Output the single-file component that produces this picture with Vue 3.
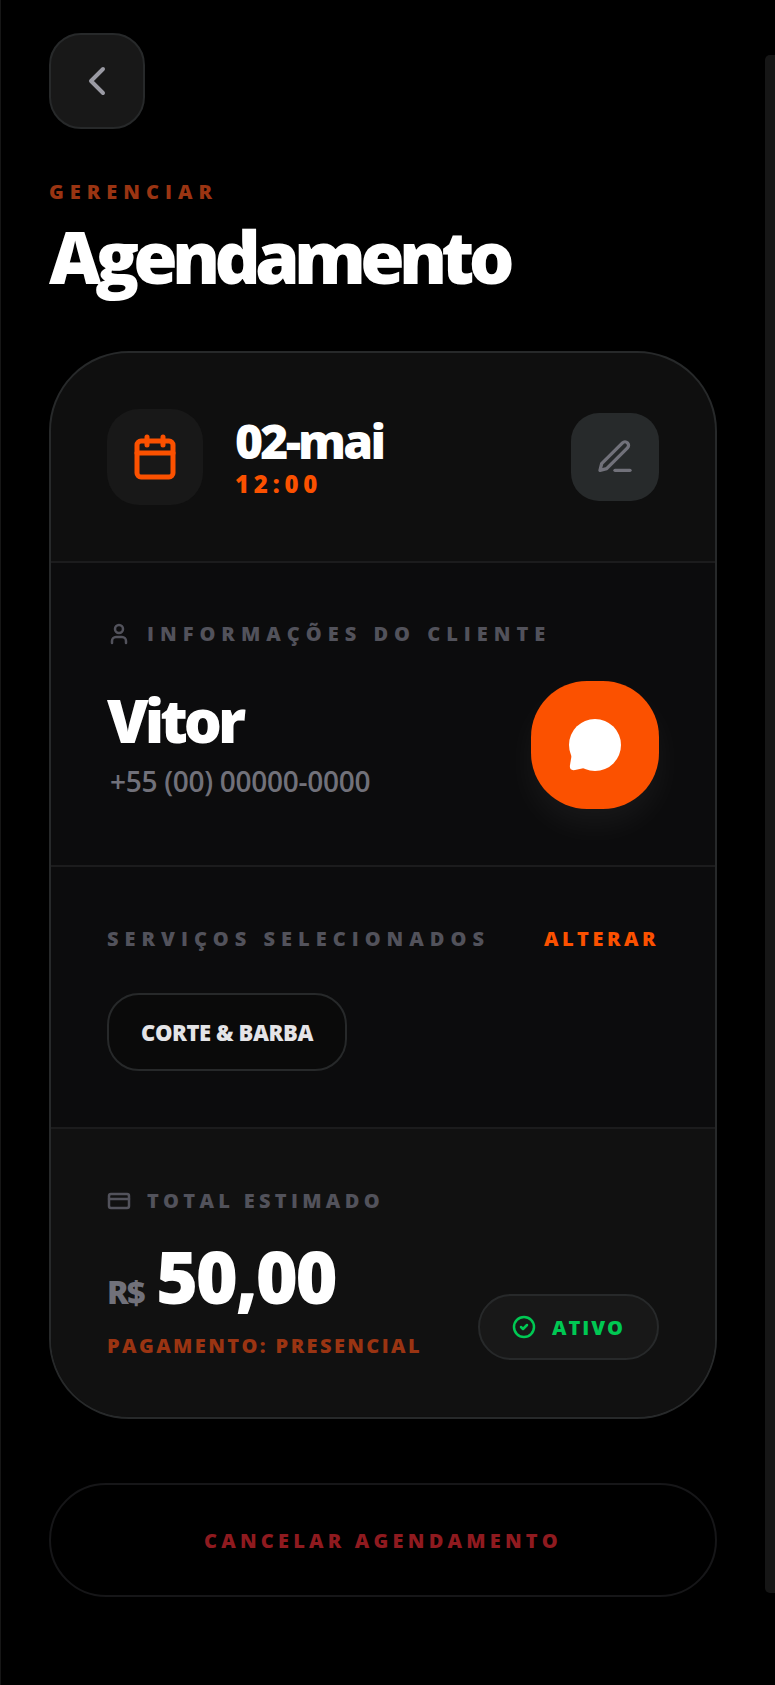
<script setup>
const telefone = '+55 (00) 00000-0000'
</script>

<template>
  <div class="pagina">
    <button class="voltar">
      <svg width="48" height="48" viewBox="0 0 24 24" fill="none" stroke="#9a9aa3" stroke-width="2" stroke-linecap="round" stroke-linejoin="round">
        <path d="m15 18-6-6 6-6" />
      </svg>
    </button>

    <p class="sobretitulo">GERENCIAR</p>
    <h1 class="titulo">Agendamento</h1>

    <section class="card">
      <div class="bloco bloco-data">
        <div class="icone-data">
          <svg width="48" height="48" viewBox="0 0 24 24" fill="none" stroke="#fb5100" stroke-width="2.5" stroke-linecap="round" stroke-linejoin="round">
            <path d="M8 2v4" />
            <path d="M16 2v4" />
            <rect x="3" y="4" width="18" height="18" rx="2" />
            <path d="M3 10h18" />
          </svg>
        </div>
        <div class="data-textos">
          <p class="data">02-mai</p>
          <p class="hora">12:00</p>
        </div>
        <button class="editar">
          <svg width="40" height="40" viewBox="0 0 24 24" fill="none" stroke="#71717a" stroke-width="2" stroke-linecap="round" stroke-linejoin="round">
            <path d="M12 20h9" />
            <path d="M16.5 3.5a2.12 2.12 0 0 1 3 3L7 19l-4 1 1-4Z" />
          </svg>
        </button>
      </div>

      <div class="bloco bloco-cliente">
        <div class="rotulo">
          <svg width="24" height="24" viewBox="0 0 24 24" fill="none" stroke="#52525b" stroke-width="2.5" stroke-linecap="round" stroke-linejoin="round">
            <path d="M19 21v-2a4 4 0 0 0-4-4H9a4 4 0 0 0-4 4v2" />
            <circle cx="12" cy="7" r="4" />
          </svg>
          <span>INFORMAÇÕES DO CLIENTE</span>
        </div>
        <div class="cliente-linha">
          <div class="cliente-textos">
            <p class="nome">Vitor</p>
            <p class="telefone">{{ telefone }}</p>
          </div>
          <button class="conversa">
            <svg width="52" height="52" viewBox="0 0 52 52" fill="#fff">
              <circle cx="26" cy="26" r="26" />
              <path d="M3 34 L1 46 Q0 52 6 51 L20 48 Z" />
            </svg>
          </button>
        </div>
      </div>

      <div class="bloco bloco-servicos">
        <div class="servicos-topo">
          <span class="rotulo-texto">SERVIÇOS SELECIONADOS</span>
          <span class="alterar">ALTERAR</span>
        </div>
        <div class="chip">CORTE &amp; BARBA</div>
      </div>

      <div class="bloco bloco-total">
        <div class="rotulo rotulo-total">
          <svg width="24" height="24" viewBox="0 0 24 24" fill="none" stroke="#52525b" stroke-width="2.5" stroke-linecap="round" stroke-linejoin="round">
            <rect x="2" y="5" width="20" height="14" rx="2" />
            <path d="M2 10h20" />
          </svg>
          <span>TOTAL ESTIMADO</span>
        </div>
        <div class="total-linha">
          <div>
            <p class="preco"><span class="moeda">R$</span><span class="valor">50,00</span></p>
            <p class="pagamento">PAGAMENTO: PRESENCIAL</p>
          </div>
          <div class="status">
            <svg width="24" height="24" viewBox="0 0 24 24" fill="none" stroke="#00c853" stroke-width="2.5" stroke-linecap="round" stroke-linejoin="round">
              <circle cx="12" cy="12" r="10" />
              <path d="m9 12 2 2 4-4" />
            </svg>
            <span>ATIVO</span>
          </div>
        </div>
      </div>
    </section>

    <button class="cancelar">CANCELAR AGENDAMENTO</button>

    <div class="barra-rolagem"></div>
  </div>
</template>

<style>
html,
body {
  margin: 0;
  background: #000;
}
</style>

<style scoped>
* {
  box-sizing: border-box;
}
p,
h1 {
  margin: 0;
}
button {
  font-family: inherit;
  cursor: pointer;
}
.pagina {
  position: relative;
  width: 775px;
  height: 1685px;
  overflow: hidden;
  padding: 33px 58px 0 48px;
  border-left: 1px solid #161616;
  background: #000;
  font-family: "Open Sans", "Liberation Sans", sans-serif;
}

/* TOPO */
.voltar {
  display: flex;
  align-items: center;
  justify-content: center;
  width: 96px;
  height: 96px;
  padding: 0;
  border: 2px solid #27292a;
  border-radius: 32px;
  background: #181818;
}
.sobretitulo {
  margin-top: 49px;
  font-size: 20px;
  line-height: 28px;
  font-weight: 800;
  letter-spacing: 6px;
  color: #9a3412;
}
.titulo {
  margin-top: 10px;
  font-size: 72px;
  line-height: 80px;
  font-weight: 800;
  letter-spacing: -5.8px;
  color: #fff;
}

/* CARD */
.card {
  margin-top: 55px;
  height: 1068px;
  border: 2px solid #27292a;
  border-radius: 80px;
  overflow: hidden;
  background: #0f0f0f;
}
.bloco {
  padding: 56px;
  border-bottom: 2px solid #1c1c1d;
}
.bloco:last-child {
  border-bottom: 0;
}
.bloco-data {
  display: flex;
  align-items: center;
  height: 210px;
}
.icone-data {
  display: flex;
  align-items: center;
  justify-content: center;
  width: 96px;
  height: 96px;
  border-radius: 32px;
  background: #181818;
}
.data-textos {
  flex: 1;
  margin-left: 32px;
}
.data {
  font-size: 48px;
  line-height: 52px;
  font-weight: 800;
  letter-spacing: -2.8px;
  color: #fff;
}
.hora {
  margin-top: 2px;
  font-size: 24px;
  line-height: 30px;
  font-weight: 800;
  letter-spacing: 0.2em;
  color: #fb5100;
}
.editar {
  display: flex;
  align-items: center;
  justify-content: center;
  width: 88px;
  height: 88px;
  padding: 0;
  border: 0;
  border-radius: 28px;
  background: #272a2b;
}

/* CLIENTE */
.bloco-cliente {
  height: 304px;
  background: #0c0c0d;
}
.rotulo {
  display: flex;
  align-items: center;
  gap: 16px;
  height: 28px;
  margin-top: 1px;
}
.rotulo span,
.rotulo-texto {
  font-size: 20px;
  line-height: 28px;
  font-weight: 800;
  letter-spacing: 6px;
  color: #52525b;
  white-space: nowrap;
}
.cliente-linha {
  display: flex;
  align-items: center;
  justify-content: space-between;
  margin-top: 33px;
}
.cliente-textos {
  padding-bottom: 3px;
}
.nome {
  font-size: 60px;
  line-height: 64px;
  font-weight: 800;
  letter-spacing: -4px;
  color: #fff;
}
.telefone {
  margin-top: 11px;
  padding-left: 3px;
  font-size: 28px;
  line-height: 36px;
  font-weight: 600;
  letter-spacing: -0.28px;
  color: #71717a;
}
.conversa {
  display: flex;
  align-items: center;
  justify-content: center;
  width: 128px;
  height: 128px;
  padding: 0;
  border: 0;
  border-radius: 56px;
  background: #fb5100;
  box-shadow: 0 16px 32px rgba(255, 255, 255, 0.05);
}

/* SERVICOS */
.bloco-servicos {
  height: 262px;
  background: #0c0c0d;
}
.servicos-topo {
  display: flex;
  justify-content: space-between;
  margin-top: 2px;
}
.alterar {
  font-size: 20px;
  line-height: 28px;
  font-weight: 800;
  letter-spacing: 3.5px;
  color: #fb5100;
}
.chip {
  display: inline-flex;
  align-items: center;
  height: 78px;
  margin-top: 40px;
  padding: 0 32px;
  border: 2px solid #27292a;
  border-radius: 32px;
  background: #0a0a0a;
  font-size: 22px;
  font-weight: 800;
  letter-spacing: -0.4px;
  color: #e4e4e7;
}

/* TOTAL */
.bloco-total {
  background: #111;
}
.rotulo-total {
  margin-top: 2px;
}
.rotulo-total span {
  letter-spacing: 4.3px;
}
.total-linha {
  display: flex;
  align-items: flex-end;
  justify-content: space-between;
  margin-top: 12px;
}
.preco {
  display: flex;
  align-items: baseline;
  height: 88px;
}
.moeda {
  font-size: 32px;
  font-weight: 800;
  letter-spacing: -1.6px;
  color: #71717a;
}
.valor {
  margin-left: 12px;
  font-size: 72px;
  font-weight: 800;
  letter-spacing: -2.3px;
  color: #fff;
}
.pagamento {
  margin-top: 17px;
  font-size: 20px;
  line-height: 28px;
  font-weight: 800;
  letter-spacing: 2.4px;
  color: #9a3412;
}
.status {
  display: flex;
  align-items: center;
  gap: 16px;
  height: 66px;
  padding: 0 32px;
  border: 2px solid #27292a;
  border-radius: 33px;
  background: #181818;
  font-size: 20px;
  font-weight: 800;
  letter-spacing: 2px;
  color: #00c853;
}

/* CANCELAR */
.cancelar {
  display: block;
  width: 100%;
  height: 114px;
  margin-top: 64px;
  border: 2px solid #161618;
  border-radius: 57px;
  background: transparent;
  font-size: 20px;
  font-weight: 800;
  letter-spacing: 4.2px;
  color: #8f1a1f;
}

.barra-rolagem {
  position: absolute;
  top: 55px;
  right: 0;
  width: 10px;
  height: 1538px;
  border-radius: 5px 0 0 5px;
  background: #161616;
}
</style>
